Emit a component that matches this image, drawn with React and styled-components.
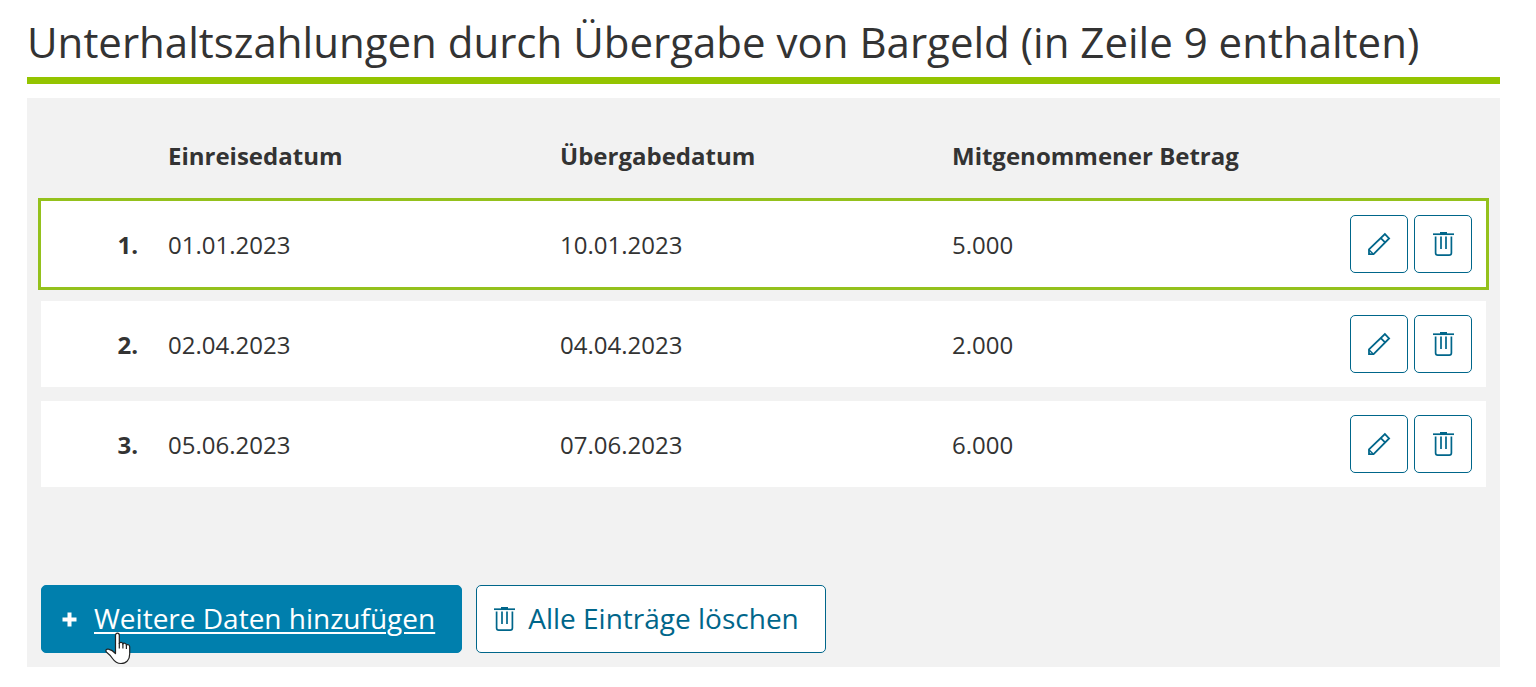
import { useState } from "react";
import styled, { createGlobalStyle } from "styled-components";

const GlobalStyle = createGlobalStyle`
  * {
    box-sizing: border-box;
  }

  body {
    margin: 0;
    background: #fff;
    color: #333;
    font-family: "Open Sans", "Noto Sans", sans-serif;
  }

  button {
    font-family: inherit;
    cursor: pointer;
  }
`;

const Page = styled.main`
  padding: 14px 36px 20px 27px;
`;

const Title = styled.h1`
  margin: 0 0 14px;
  padding-bottom: 7px;
  border-bottom: 7px solid #94c400;
  font-size: 42px;
  font-weight: 400;
  line-height: 56px;
`;

const Panel = styled.section`
  padding: 0 14px 14px;
  background: #f2f2f2;
`;

const Table = styled.table`
  width: 100%;
  table-layout: fixed;
  border-collapse: separate;
  border-spacing: 0 14px;
  font-size: 24px;
  line-height: 34px;
  text-align: left;
`;

const HeadCell = styled.th`
  width: ${(props) => props.$width || "auto"};
  height: 75px;
  padding: 12px 0 0;
  font-weight: 700;
`;

const Row = styled.tr`
  background: #fff;
  outline: ${(props) => (props.$active ? "3px solid #94c11c" : "none")};
`;

const NumberCell = styled.th`
  padding: 2px 30px 0 0;
  font-weight: 700;
  text-align: right;
`;

const Cell = styled.td`
  height: 86px;
  padding: 2px 0 0;
`;

const ActionCell = styled.td`
  padding: 0 14px 0 0;
`;

const Actions = styled.div`
  display: flex;
  justify-content: flex-end;
  gap: 6px;
`;

const IconButton = styled.button`
  display: flex;
  align-items: center;
  justify-content: center;
  width: 58px;
  height: 58px;
  padding: 0;
  border: 1px solid #00668a;
  border-radius: 5px;
  background: #fff;
  color: #00668a;
`;

const Footer = styled.div`
  display: flex;
  gap: 14px;
  margin-top: 84px;
`;

const Button = styled.button`
  position: relative;
  display: flex;
  align-items: center;
  gap: ${(props) => (props.$primary ? "17px" : "12px")};
  height: 68px;
  padding: ${(props) => (props.$primary ? "0 26px 0 20px" : "0 26px 0 15px")};
  border: 1px solid ${(props) => (props.$primary ? "#007fad" : "#00668a")};
  border-radius: 5px;
  background: ${(props) => (props.$primary ? "#007fad" : "#fff")};
  color: ${(props) => (props.$primary ? "#fff" : "#00668a")};
  font-size: 28px;
  line-height: 38px;
`;

const ButtonText = styled.span`
  padding-bottom: 2px;
  text-decoration: ${(props) => (props.$underlined ? "underline" : "none")};
  text-decoration-thickness: 2px;
  text-underline-offset: 3px;
`;

const Pointer = styled.svg`
  position: absolute;
  left: 63px;
  top: 46px;
  pointer-events: none;
`;

function PencilIcon() {
  return (
    <svg width="24" height="24" viewBox="0 0 24 24" fill="none" stroke="currentColor" strokeWidth="1.8" aria-hidden="true">
      <path d="M2 22.2V17.4L17.9 2.1L22.1 6.4L6.6 22.2Z" />
      <path d="M13.8 6.1L18.1 10.3" />
      <path d="M2 17.8L6.2 22" strokeWidth="1.3" />
    </svg>
  );
}

function TrashIcon() {
  return (
    <svg width="24" height="26" viewBox="0 0 24 26" fill="none" stroke="currentColor" strokeWidth="1.7" aria-hidden="true">
      <path d="M2 3.2H23" />
      <path d="M9 2.2H16" strokeWidth="2.4" />
      <path d="M4.6 5.5V22Q4.6 24.1 6.8 24.1H18.2Q20.4 24.1 20.4 22V5.5" />
      <path d="M10 5.5V18M15 5.5V18" />
    </svg>
  );
}

function PlusIcon() {
  return (
    <svg width="15" height="15" viewBox="0 0 15 15" stroke="currentColor" strokeWidth="4" aria-hidden="true">
      <path d="M7.5 0.5V14.5M0.5 7.5H14.5" />
    </svg>
  );
}

function HandPointer() {
  return (
    <Pointer width="28" height="34" viewBox="0 0 28 34" aria-hidden="true">
      <path
        d="M10.5 19V3.2C10.5 0.4 14.3 0.4 14.3 3.2V11.5C14.6 9.8 17.7 9.9 17.9 12.1C18.5 10.7 21.2 11 21.4 13.1C22.3 12.1 24.7 12.6 24.7 14.8V22C24.7 27.5 21.5 31.5 16 31.5C11.5 31.5 9.5 29.5 7.5 26.5C5.5 23.5 4 22 1.6 20.2C0 18.5 1.4 16.7 3.5 17.2C6 17.7 8.5 19.3 10.5 21.5Z"
        fill="#fff"
        stroke="#222"
        strokeWidth="1.2"
        strokeLinejoin="round"
      />
      <path d="M14.3 11V16.5M17.9 12V16.5M21.4 13V17" fill="none" stroke="#222" strokeWidth="1.2" />
    </Pointer>
  );
}

const initialEntries = [
  { id: 1, entry: "01.01.2023", handover: "10.01.2023", amount: "5.000" },
  { id: 2, entry: "02.04.2023", handover: "04.04.2023", amount: "2.000" },
  { id: 3, entry: "05.06.2023", handover: "07.06.2023", amount: "6.000" },
];

export default function App() {
  const [entries, setEntries] = useState(initialEntries);
  const [activeId, setActiveId] = useState(1);

  const removeEntry = (id) => {
    setEntries(entries.filter((item) => item.id !== id));
  };

  const addEntry = () => {
    const id = Date.now();
    setEntries([...entries, { id, entry: "", handover: "", amount: "" }]);
    setActiveId(id);
  };

  return (
    <>
      <GlobalStyle />
      <Page>
        <Title>Unterhaltszahlungen durch Übergabe von Bargeld (in Zeile 9 enthalten)</Title>
        <Panel>
          <Table>
            <thead>
              <tr>
                <HeadCell as="td" $width="127px" />
                <HeadCell scope="col">Einreisedatum</HeadCell>
                <HeadCell scope="col">Übergabedatum</HeadCell>
                <HeadCell scope="col">Mitgenommener Betrag</HeadCell>
                <HeadCell as="td" $width="142px" />
              </tr>
            </thead>
            <tbody>
              {entries.map((item, index) => (
                <Row key={item.id} $active={item.id === activeId}>
                  <NumberCell scope="row">{index + 1}.</NumberCell>
                  <Cell>{item.entry}</Cell>
                  <Cell>{item.handover}</Cell>
                  <Cell>{item.amount}</Cell>
                  <ActionCell>
                    <Actions>
                      <IconButton type="button" aria-label="Bearbeiten" onClick={() => setActiveId(item.id)}>
                        <PencilIcon />
                      </IconButton>
                      <IconButton type="button" aria-label="Löschen" onClick={() => removeEntry(item.id)}>
                        <TrashIcon />
                      </IconButton>
                    </Actions>
                  </ActionCell>
                </Row>
              ))}
            </tbody>
          </Table>
          <Footer>
            <Button type="button" $primary onClick={addEntry}>
              <PlusIcon />
              <ButtonText $underlined>Weitere Daten hinzufügen</ButtonText>
              <HandPointer />
            </Button>
            <Button type="button" onClick={() => setEntries([])}>
              <TrashIcon />
              <ButtonText>Alle Einträge löschen</ButtonText>
            </Button>
          </Footer>
        </Panel>
      </Page>
    </>
  );
}
